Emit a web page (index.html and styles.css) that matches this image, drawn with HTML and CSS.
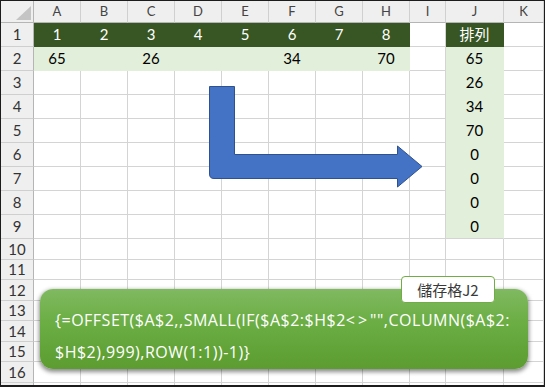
FILE: index.html
```html
<!DOCTYPE html>
<html lang="zh-Hant">
<head>
<meta charset="utf-8">
<title>排列</title>
<link rel="stylesheet" href="styles.css">
</head>
<body>
<div class="sheet">
  <div class="row hdr">
    <div class="c corner"></div>
    <div class="c ch">A</div><div class="c ch">B</div><div class="c ch">C</div><div class="c ch">D</div><div class="c ch">E</div><div class="c ch">F</div><div class="c ch">G</div><div class="c ch">H</div><div class="c ch">I</div><div class="c ch">J</div><div class="c ch">K</div>
  </div>
  <div class="row r24">
    <div class="c rh">1</div>
    <div class="c dk">1</div><div class="c dk">2</div><div class="c dk">3</div><div class="c dk">4</div><div class="c dk">5</div><div class="c dk">6</div><div class="c dk">7</div><div class="c dk">8</div><div class="c"></div><div class="c dk">排列</div><div class="c"></div>
  </div>
  <div class="row r24">
    <div class="c rh">2</div>
    <div class="c lt">65</div><div class="c lt"></div><div class="c lt">26</div><div class="c lt"></div><div class="c lt"></div><div class="c lt">34</div><div class="c lt"></div><div class="c lt">70</div><div class="c"></div><div class="c lt">65</div><div class="c"></div>
  </div>
  <div class="row r24">
    <div class="c rh">3</div>
    <div class="c"></div><div class="c"></div><div class="c"></div><div class="c"></div><div class="c"></div><div class="c"></div><div class="c"></div><div class="c"></div><div class="c"></div><div class="c lt">26</div><div class="c"></div>
  </div>
  <div class="row r24">
    <div class="c rh">4</div>
    <div class="c"></div><div class="c"></div><div class="c"></div><div class="c"></div><div class="c"></div><div class="c"></div><div class="c"></div><div class="c"></div><div class="c"></div><div class="c lt">34</div><div class="c"></div>
  </div>
  <div class="row r24">
    <div class="c rh">5</div>
    <div class="c"></div><div class="c"></div><div class="c"></div><div class="c"></div><div class="c"></div><div class="c"></div><div class="c"></div><div class="c"></div><div class="c"></div><div class="c lt">70</div><div class="c"></div>
  </div>
  <div class="row r24">
    <div class="c rh">6</div>
    <div class="c"></div><div class="c"></div><div class="c"></div><div class="c"></div><div class="c"></div><div class="c"></div><div class="c"></div><div class="c"></div><div class="c"></div><div class="c lt">0</div><div class="c"></div>
  </div>
  <div class="row r24">
    <div class="c rh">7</div>
    <div class="c"></div><div class="c"></div><div class="c"></div><div class="c"></div><div class="c"></div><div class="c"></div><div class="c"></div><div class="c"></div><div class="c"></div><div class="c lt">0</div><div class="c"></div>
  </div>
  <div class="row r24">
    <div class="c rh">8</div>
    <div class="c"></div><div class="c"></div><div class="c"></div><div class="c"></div><div class="c"></div><div class="c"></div><div class="c"></div><div class="c"></div><div class="c"></div><div class="c lt">0</div><div class="c"></div>
  </div>
  <div class="row r24">
    <div class="c rh">9</div>
    <div class="c"></div><div class="c"></div><div class="c"></div><div class="c"></div><div class="c"></div><div class="c"></div><div class="c"></div><div class="c"></div><div class="c"></div><div class="c lt last">0</div><div class="c"></div>
  </div>
  <div class="row r21">
    <div class="c rh">10</div>
    <div class="c"></div><div class="c"></div><div class="c"></div><div class="c"></div><div class="c"></div><div class="c"></div><div class="c"></div><div class="c"></div><div class="c"></div><div class="c"></div><div class="c"></div>
  </div>
  <div class="row r20">
    <div class="c rh">11</div>
    <div class="c"></div><div class="c"></div><div class="c"></div><div class="c"></div><div class="c"></div><div class="c"></div><div class="c"></div><div class="c"></div><div class="c"></div><div class="c"></div><div class="c"></div>
  </div>
  <div class="row r21">
    <div class="c rh">12</div>
    <div class="c"></div><div class="c"></div><div class="c"></div><div class="c"></div><div class="c"></div><div class="c"></div><div class="c"></div><div class="c"></div><div class="c"></div><div class="c"></div><div class="c"></div>
  </div>
  <div class="row r20">
    <div class="c rh">13</div>
    <div class="c"></div><div class="c"></div><div class="c"></div><div class="c"></div><div class="c"></div><div class="c"></div><div class="c"></div><div class="c"></div><div class="c"></div><div class="c"></div><div class="c"></div>
  </div>
  <div class="row r21">
    <div class="c rh">14</div>
    <div class="c"></div><div class="c"></div><div class="c"></div><div class="c"></div><div class="c"></div><div class="c"></div><div class="c"></div><div class="c"></div><div class="c"></div><div class="c"></div><div class="c"></div>
  </div>
  <div class="row r20">
    <div class="c rh">15</div>
    <div class="c"></div><div class="c"></div><div class="c"></div><div class="c"></div><div class="c"></div><div class="c"></div><div class="c"></div><div class="c"></div><div class="c"></div><div class="c"></div><div class="c"></div>
  </div>
  <div class="row r21">
    <div class="c rh">16</div>
    <div class="c"></div><div class="c"></div><div class="c"></div><div class="c"></div><div class="c"></div><div class="c"></div><div class="c"></div><div class="c"></div><div class="c"></div><div class="c"></div><div class="c"></div>
  </div>
  <div class="row rest">
    <div class="c rh"></div>
    <div class="c"></div><div class="c"></div><div class="c"></div><div class="c"></div><div class="c"></div><div class="c"></div><div class="c"></div><div class="c"></div><div class="c"></div><div class="c"></div><div class="c"></div>
  </div>

  <svg class="arrow" width="545" height="387" viewBox="0 0 545 387" aria-hidden="true">
    <path d="M209.5 86.5 H234.5 V154.5 H397.5 V146 L422 166.5 L397.5 187 V178.5 H214 Q209.5 178.5 209.5 174 Z" fill="#4472c4" stroke="#2f528f" stroke-width="1"/>
  </svg>

  <div class="callout">
    <div class="line">{=OFFSET($A$2,,SMALL(IF($A$2:$H$2<span class="op">&lt;&gt;</span>"",COLUMN($A$2:</div>
    <div class="line">$H$2),999),ROW(1:1))-1)}</div>
  </div>
  <div class="tag">儲存格J2</div>
</div>
</body>
</html>
```

FILE: styles.css
```css
* { box-sizing: border-box; }
html, body { margin: 0; padding: 0; background: #ffffff; }

.sheet {
  position: relative;
  width: 545px;
  height: 387px;
  overflow: hidden;
  border: 1px solid #1c1c1c;
  border-bottom-width: 2px;
  font-family: Lato, "Noto Sans CJK TC", sans-serif;
  font-size: 15px;
  color: #000;
}

.row {
  display: grid;
  grid-template-columns: 33px repeat(8, 47px) 36px 58px 1fr;
}
.hdr { height: 22px; }
.r24 { height: 24px; }
.r21 { height: 21px; }
.r20 { height: 20px; }
.rest { height: 10px; }

.c {
  border-right: 1px solid #d4d4d4;
  border-bottom: 1px solid #d4d4d4;
  display: flex;
  align-items: center;
  justify-content: center;
  white-space: nowrap;
  line-height: 1;
}

.ch, .rh, .corner {
  background: #efefef;
  color: #444;
  border-right-color: #d0d0d0;
}
.ch { font-size: 13px; border-bottom-color: #b5b5b5; padding-bottom: 1px; }
.rh { font-size: 15px; border-right-color: #b5b5b5; color: #333; border-bottom-color: #cfcfcf; }
.corner {
  position: relative;
  border-right-color: #b5b5b5;
  border-bottom-color: #b5b5b5;
}
.corner::after {
  content: "";
  position: absolute;
  right: 2px;
  bottom: 2px;
  width: 15px;
  height: 14px;
  background: #c4c4c4;
  clip-path: polygon(100% 0, 100% 100%, 0 100%);
}

.dk {
  background: #375623;
  color: #ffffff;
  border-color: #375623;
}
.lt {
  background: #e2efda;
  border-color: #e2efda;
}
.lt.last { border-bottom-color: #d4d4d4; }

.arrow {
  position: absolute;
  left: -1px;
  top: -1px;
}

.callout {
  position: absolute;
  left: 39px;
  top: 288px;
  width: 488px;
  height: 80px;
  border-radius: 13px;
  background: linear-gradient(#80b961, #6aad42 45%, #5c9c31);
  box-shadow: 0 2px 4px 1px rgba(0, 0, 0, 0.45);
  padding: 15px 0 0 15px;
  color: #ffffff;
  font-family: "Open Sans", "Noto Sans CJK TC", sans-serif;
  font-size: 16px;
  letter-spacing: 0.5px;
  line-height: 32px;
  white-space: nowrap;
}
.op { letter-spacing: 3px; }

.tag {
  position: absolute;
  left: 400px;
  top: 275px;
  width: 94px;
  height: 27px;
  border: 1px solid #70ad47;
  border-radius: 4px;
  background: #ffffff;
  color: #3a3a3a;
  font-family: "Noto Sans CJK TC", sans-serif;
  font-size: 15px;
  display: flex;
  align-items: center;
  justify-content: center;
}
```
